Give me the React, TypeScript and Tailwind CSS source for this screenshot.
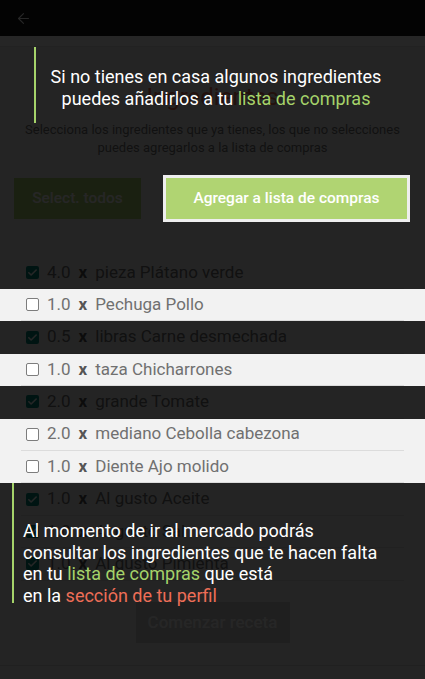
import React from "react";
import { ArrowLeft } from "lucide-react";

type Item = { qty: string; name: string; checked: boolean; hl: boolean };

const items: Item[] = [
  { qty: "4.0", name: "pieza Plátano verde", checked: true, hl: false },
  { qty: "1.0", name: "Pechuga Pollo", checked: false, hl: true },
  { qty: "0.5", name: "libras Carne desmechada", checked: true, hl: false },
  { qty: "1.0", name: "taza Chicharrones", checked: false, hl: true },
  { qty: "2.0", name: "grande Tomate", checked: true, hl: false },
  { qty: "2.0", name: "mediano Cebolla cabezona", checked: false, hl: true },
  { qty: "1.0", name: "Diente Ajo molido", checked: false, hl: true },
  { qty: "1.0", name: "Al gusto Aceite", checked: true, hl: false },
  { qty: "1.0", name: "Al gusto Sal", checked: true, hl: false },
  { qty: "1.0", name: "Al gusto Pimienta", checked: true, hl: false },
];

function Check({ checked }: { checked: boolean }) {
  if (checked) {
    return (
      <span className="flex h-[13px] w-[13px] items-center justify-center rounded-[2px] bg-[#00897b]">
        <svg width="11" height="11" viewBox="0 0 24 24" fill="none" stroke="#ffffff" strokeWidth="3.5" strokeLinecap="round" strokeLinejoin="round">
          <path d="M4 12.5l5 5L20 6.5" />
        </svg>
      </span>
    );
  }
  return <span className="box-border h-[13px] w-[13px] rounded-[2px] border-[1.5px] border-[#7d7d7d] bg-white" />;
}

export default function App() {
  return (
    <div className="relative h-[679px] w-[425px] overflow-hidden bg-[#f2f2f2]" style={{ fontFamily: "Roboto, 'Noto Sans', sans-serif" }}>
      {/* header */}
      <div className="flex h-[36px] items-center bg-[#1a1a1a] pl-[15px]">
        <ArrowLeft size={17} color="#ffffff" strokeWidth={1.5} />
      </div>
      <div className="h-[11px] border-b border-[#e0e0e0] bg-white" />

      {/* title */}
      <div className="pt-[36px] text-center text-[24px] leading-[28px] text-[#e8705a]">Ingredientes</div>
      <div className="mt-[10px] text-center text-[13px] leading-[18px] text-[#757575]">
        Selecciona los ingredientes que ya tienes, los que no selecciones
        <br />
        puedes agregarlos a la lista de compras
      </div>

      {/* buttons */}
      <div className="mt-[21px] flex gap-[25px] pl-[14px]">
        <div className="flex h-[41px] w-[127px] items-center justify-center bg-[#b0d472] text-[15.5px] font-medium text-white">
          Select. todos
        </div>
        <div className="relative z-20 flex h-[41px] w-[241px] items-center justify-center bg-[#b0d472] text-[15.5px] font-medium text-white outline-3 outline-[#eeeeee]">
          Agregar a lista de compras
        </div>
      </div>

      {/* list */}
      <div className="mt-[37.6px]">
        {items.map((it, i) => (
          <div key={i} className={`h-[32.4px] ${it.hl ? "relative z-20 bg-[#f2f2f2]" : ""}`}>
            <div className="mx-[21px] box-border flex h-full items-center gap-[8px] border-b border-[#dcdcdc] pl-[5px] text-[17px] text-[#707070]">
              <Check checked={it.checked} />
              <span>{it.qty}</span>
              <span className="font-bold text-[#555555]">x</span>
              <span>{it.name}</span>
            </div>
          </div>
        ))}
      </div>

      <div className="mt-[21.4px] flex justify-center">
        <div className="flex h-[41px] w-[154px] items-center justify-center bg-[#cccccc] text-[17px] font-medium text-white">
          Comenzar receta
        </div>
      </div>
      <div className="mt-[22px] h-[20px] border-t border-[#d6d6d6] bg-[#f2f2f2]" />

      {/* overlay */}
      <div className="absolute inset-0 z-10 bg-black/85" />

      {/* top tip */}
      <div className="absolute left-[34px] top-[47px] z-30 box-border h-[76px] w-[362px] border-l-2 border-[#a5d36a] pt-[19px] text-center text-[18px] leading-[22px] text-white">
        Si no tienes en casa algunos ingredientes
        <br />
        puedes añadirlos a tu <span className="text-[#a5d36a]">lista de compras</span>
      </div>

      {/* bottom tip */}
      <div className="absolute left-[12px] top-[483px] z-30 box-border h-[120px] w-[405px] border-l-2 border-[#a5d36a] pl-[9px] pt-[37px] text-[18px] leading-[21.5px] text-white">
        Al momento de ir al mercado podrás
        <br />
        consultar los ingredientes que te hacen falta
        <br />
        en tu <span className="text-[#a5d36a]">lista de compras</span> que está
        <br />
        en la <span className="text-[#ee6e57]">sección de tu perfil</span>
      </div>
    </div>
  );
}
